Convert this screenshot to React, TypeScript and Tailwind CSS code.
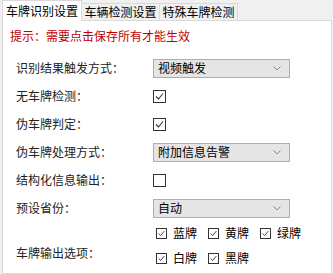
import React from 'react'

const font = { fontFamily: '"Noto Sans CJK SC", "Microsoft YaHei", sans-serif' }

function Check({ checked, small }: { checked: boolean; small?: boolean }) {
  const box = small ? 'h-[11px] w-[11px]' : 'h-[13px] w-[13px]'
  return (
    <span className={`inline-flex ${box} items-center justify-center border border-[#333] bg-white`}>
      {checked && (
        <svg width={small ? 9 : 11} height={small ? 9 : 11} viewBox="0 0 11 11" fill="none">
          <path d="M2 5.5 L4.5 8 L9 2.5" stroke="#333" strokeWidth="1.1" />
        </svg>
      )}
    </span>
  )
}

function Select({ value }: { value: string }) {
  return (
    <div className="flex h-[19px] w-[137px] items-center justify-between border border-[#adadad] bg-[#e5e5e5] pl-[4px] pr-[8px] text-[12px] text-black">
      <span>{value}</span>
      <svg width="8" height="5" viewBox="0 0 8 5" fill="none">
        <path d="M0.5 0.5 L4 4 L7.5 0.5" stroke="#888" strokeWidth="1" />
      </svg>
    </div>
  )
}

function Row({ label, children }: { label: string; children: React.ReactNode }) {
  return (
    <div className="flex h-[28px] items-center">
      <div className="w-[150px] pl-[13px] text-[12px] text-[#222]">{label}</div>
      {children}
    </div>
  )
}

export default function App() {
  const tabs = ['车牌识别设置', '车辆检测设置', '特殊车牌检测']

  return (
    <div className="h-[274px] w-[333px] overflow-hidden bg-[#f0f0f0]" style={font}>
      {/* tab strip */}
      <div className="flex h-[20px] items-end pl-[2px]">
        {tabs.map((t, i) =>
          i === 0 ? (
            <div key={t} className="relative z-10 -mb-px flex h-[21px] w-[80px] items-center justify-center border border-b-0 border-[#d9d9d9] bg-white text-[12px] text-black">
              {t}
            </div>
          ) : (
            <div key={t} className="flex h-[17px] w-[78px] items-center justify-center border border-b-0 border-l-0 border-[#d9d9d9] bg-[#f0f0f0] text-[12px] text-black">
              {t}
            </div>
          )
        )}
      </div>

      {/* panel */}
      <div className="ml-[2px] mr-[1px] h-[254px] border border-[#d9d9d9] bg-white">
        <div className="pl-[7px] pt-[6px] pb-[9px] text-[12px] text-[#c00000]">提示：需要点击保存所有才能生效</div>

        <Row label="识别结果触发方式：">
          <Select value="视频触发" />
        </Row>
        <Row label="无车牌检测：">
          <Check checked />
        </Row>
        <Row label="伪车牌判定：">
          <Check checked />
        </Row>
        <Row label="伪车牌处理方式：">
          <Select value="附加信息告警" />
        </Row>
        <Row label="结构化信息输出：">
          <Check checked={false} />
        </Row>
        <Row label="预设省份：">
          <Select value="自动" />
        </Row>

        <div className="flex items-center pt-[2px]">
          <div className="w-[153px] pl-[13px] pt-[14px] text-[12px] text-[#222]">车牌输出选项：</div>
          <div className="flex flex-col gap-[7px]">
            <div className="flex gap-[11px] text-[12px] text-black">
              {['蓝牌', '黄牌', '绿牌'].map(c => (
                <label key={c} className="flex items-center gap-[6px]">
                  <Check checked small />
                  {c}
                </label>
              ))}
            </div>
            <div className="flex gap-[11px] text-[12px] text-black">
              {['白牌', '黑牌'].map(c => (
                <label key={c} className="flex items-center gap-[6px]">
                  <Check checked small />
                  {c}
                </label>
              ))}
            </div>
          </div>
        </div>
      </div>
    </div>
  )
}
